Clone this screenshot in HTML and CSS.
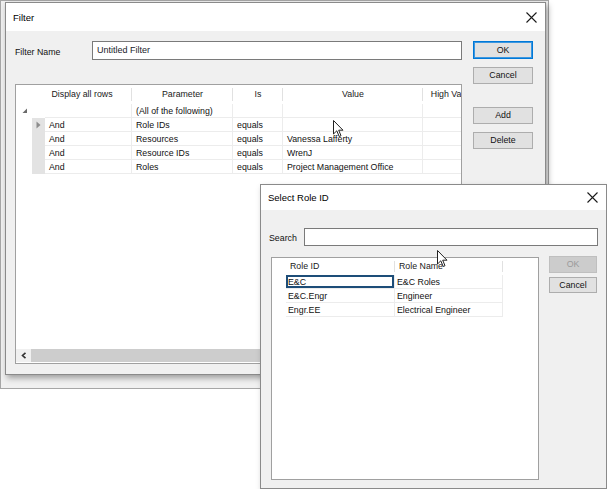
FILE: index.html
```html
<!DOCTYPE html>
<html>
<head>
<meta charset="utf-8">
<link rel="stylesheet" href="styles.css">
</head>
<body>
<div class="desktop">
  <div class="backwin"></div>

  <section class="dlg filter">
    <header class="titlebar">
      <span class="title">Filter</span>
      <svg class="close" width="11" height="11" viewBox="0 0 11 11"><path d="M0.5 0.5 L10.5 10.5 M10.5 0.5 L0.5 10.5" stroke="#1a1a1a" stroke-width="1.1" fill="none"/></svg>
    </header>
    <div class="fbody">
      <div class="fmain">
        <div class="namerow">
          <span class="lbl namelbl">Filter Name</span>
          <div class="input">Untitled Filter</div>
        </div>
        <div class="grid fgrid">
          <div class="gbody">
            <div class="frow fhead">
              <div class="hc"></div>
              <div class="hc span2 sep">Display all rows</div>
              <div class="hc sep">Parameter</div>
              <div class="hc sep">Is</div>
              <div class="hc sep">Value</div>
              <div class="hc">High Value</div>
            </div>
            <div class="frow">
              <div class="c0"><svg width="6" height="6" viewBox="0 0 6 6"><polygon points="5,0.5 5,5 0.5,5" fill="#6a6a6a"/></svg></div>
              <div class="c1 white"></div>
              <div class="cd"></div>
              <div class="cd">(All of the following)</div>
              <div class="cd"></div>
              <div class="cd"></div>
              <div class="cd"></div>
            </div>
            <div class="frow">
              <div class="c0"></div>
              <div class="c1"><svg width="5" height="8" viewBox="0 0 5 8"><polygon points="0.5,0.5 4.5,4 0.5,7.5" fill="#8c8c8c"/></svg></div>
              <div class="cd">And</div>
              <div class="cd">Role IDs</div>
              <div class="cd">equals</div>
              <div class="cd"></div>
              <div class="cd"></div>
            </div>
            <div class="frow">
              <div class="c0"></div>
              <div class="c1"></div>
              <div class="cd">And</div>
              <div class="cd">Resources</div>
              <div class="cd">equals</div>
              <div class="cd">Vanessa Lafferty</div>
              <div class="cd"></div>
            </div>
            <div class="frow">
              <div class="c0"></div>
              <div class="c1"></div>
              <div class="cd">And</div>
              <div class="cd">Resource IDs</div>
              <div class="cd">equals</div>
              <div class="cd">WrenJ</div>
              <div class="cd"></div>
            </div>
            <div class="frow">
              <div class="c0"></div>
              <div class="c1"></div>
              <div class="cd">And</div>
              <div class="cd">Roles</div>
              <div class="cd">equals</div>
              <div class="cd">Project Management Office</div>
              <div class="cd"></div>
            </div>
          </div>
          <div class="hscroll">
            <div class="sarrow"><svg width="6" height="7" viewBox="0 0 6 7"><path d="M4.5 0.8 L1.5 3.5 L4.5 6.2" stroke="#333" stroke-width="1.6" fill="none"/></svg></div>
            <div class="sthumb"></div>
          </div>
        </div>
      </div>
      <div class="btns fbtns">
        <div class="btn default">OK</div>
        <div class="btn b-cancel">Cancel</div>
        <div class="btn b-add">Add</div>
        <div class="btn b-del">Delete</div>
      </div>
    </div>
  </section>

  <section class="dlg role">
    <header class="titlebar rtitle">
      <span class="title">Select Role ID</span>
      <svg class="close" width="11" height="11" viewBox="0 0 11 11"><path d="M0.5 0.5 L10.5 10.5 M10.5 0.5 L0.5 10.5" stroke="#1a1a1a" stroke-width="1.1" fill="none"/></svg>
    </header>
    <div class="rbody">
      <div class="searchrow">
        <span class="lbl searchlbl">Search</span>
        <div class="input"></div>
      </div>
      <div class="rmain">
        <div class="grid rgrid">
          <div class="rrow rhead">
            <div class="hc"></div>
            <div class="hc left sep">Role ID</div>
            <div class="hc left sep">Role Name</div>
            <div class="hc"></div>
          </div>
          <div class="rrow">
            <div class="r0"></div>
            <div class="cd focus">E&amp;C</div>
            <div class="cd">E&amp;C Roles</div>
          </div>
          <div class="rrow">
            <div class="r0"></div>
            <div class="cd">E&amp;C.Engr</div>
            <div class="cd">Engineer</div>
          </div>
          <div class="rrow">
            <div class="r0"></div>
            <div class="cd">Engr.EE</div>
            <div class="cd">Electrical Engineer</div>
          </div>
        </div>
        <div class="btns rbtns">
          <div class="btn disabled">OK</div>
          <div class="btn r-cancel">Cancel</div>
        </div>
      </div>
    </div>
  </section>

  <svg class="cursor cur1" width="12" height="18" viewBox="0 0 12 18"><path d="M0.5 0.5 L0.5 14 L3.8 10.8 L6.2 16.5 L8 15.7 L5.7 10.2 L10 10.2 Z" fill="#fff" stroke="#222" stroke-width="1"/></svg>
  <svg class="cursor cur2" width="12" height="18" viewBox="0 0 12 18"><path d="M0.5 0.5 L0.5 14 L3.8 10.8 L6.2 16.5 L8 15.7 L5.7 10.2 L10 10.2 Z" fill="#fff" stroke="#222" stroke-width="1"/></svg>
</div>
</body>
</html>
```

FILE: styles.css
```css
* { box-sizing: border-box; }
html, body { margin: 0; padding: 0; background: #fff; }
body {
  font-family: "Liberation Sans", Arial, sans-serif;
  font-size: 8.8px;
  color: #111;
}
.desktop {
  position: relative;
  width: 607px;
  height: 489px;
  overflow: hidden;
  background: #fff;
}
.backwin {
  position: absolute;
  left: 0;
  top: 0;
  width: 549px;
  height: 389px;
  background: #f0f0f0;
  border: 1px solid #a6a6a6;
}
.dlg {
  position: absolute;
  background: #f0f0f0;
  border: 1px solid #8a8a8a;
  display: flex;
  flex-direction: column;
}
.filter {
  left: 5px;
  top: 2px;
  width: 541px;
  height: 373px;
  box-shadow: 2px 3px 6px rgba(0, 0, 0, 0.35);
}
.role {
  left: 260px;
  top: 184px;
  width: 347px;
  height: 305px;
  box-shadow: 2px 3px 6px rgba(0, 0, 0, 0.25);
}
.titlebar {
  height: 28px;
  flex: none;
  background: #fff;
  display: flex;
  align-items: center;
  justify-content: space-between;
  padding: 1px 8px 0 7px;
}
.rtitle { height: 25px; padding: 0 8px 0 7px; }
.title { font-size: 9.5px; color: #000; }
.close { display: block; }

/* filter body */
.fbody {
  flex: 1;
  display: flex;
  padding: 10px 12px 10px 9px;
}
.fmain {
  width: 447px;
  display: flex;
  flex-direction: column;
}
.namerow {
  height: 19px;
  display: flex;
  align-items: center;
}
.namelbl { width: 77px; padding-top: 2px; }
.input {
  flex: 1;
  height: 100%;
  background: #fff;
  border: 1px solid #7a7a7a;
  padding: 0 0 0 4px;
  line-height: 16px;
  font-size: 9px;
  color: #1a1a2a;
}
.fgrid {
  margin-top: 24px;
  flex: 1;
}
.grid {
  background: #fff;
  border: 1px solid #a0a0a0;
  display: flex;
  flex-direction: column;
  overflow: hidden;
}
.gbody { flex: 1; overflow: hidden; }
.frow {
  display: grid;
  grid-template-columns: 16px 13px 87px 101px 50px 140px 58px;
  height: 14px;
  width: 466px;
}
.fhead { height: 19px; }
.hc {
  height: 100%;
  text-align: center;
  line-height: 19px;
  white-space: nowrap;
  overflow: hidden;
  background: #fff;
  color: #1a1a1a;
  position: relative;
}
.hc.sep::after {
  content: "";
  position: absolute;
  right: 0;
  top: 3px;
  bottom: 3px;
  width: 1px;
  background: #e1e1e1;
}
.span2 { grid-column: span 2; }
.c0 {
  display: flex;
  align-items: center;
  justify-content: center;
  padding-left: 1px;
}
.c1 {
  background: #e3e3e3;
  display: flex;
  align-items: center;
  justify-content: center;
}
.c1.white { background: #fff; }
.cd {
  border-right: 1px solid #ececec;
  border-bottom: 1px solid #ececec;
  padding-left: 4px;
  line-height: 14px;
  white-space: nowrap;
  overflow: hidden;
}
.hscroll {
  height: 13px;
  flex: none;
  display: flex;
  margin-bottom: 1px;
}
.sarrow {
  width: 15px;
  background: #f0f0f0;
  display: flex;
  align-items: center;
  justify-content: center;
}
.sthumb { flex: 1; background: #cdcdcd; }

/* buttons */
.btns { display: flex; flex-direction: column; }
.fbtns { width: 60px; margin-left: 11px; }
.btn {
  height: 17px;
  background: #e1e1e1;
  border: 1px solid #adadad;
  text-align: center;
  line-height: 15px;
  color: #111;
  font-size: 8.8px;
}
.btn.default { height: 18px; border: 1px solid #0078d7; box-shadow: inset 0 0 0 1px #3c97e0; line-height: 16px; }
.b-cancel { margin-top: 8px; }
.b-add { margin-top: 23px; }
.b-del { margin-top: 8px; }

/* role body */
.rbody {
  flex: 1;
  display: flex;
  flex-direction: column;
  padding: 18px 8px 8px 8px;
}
.searchrow {
  height: 18px;
  display: flex;
  align-items: center;
}
.searchlbl { width: 35px; padding-top: 1px; }
.rmain {
  flex: 1;
  display: flex;
  margin-top: 10px;
}
.rgrid {
  width: 268px;
  margin: 1px 0 0 2px;
}
.rrow {
  display: grid;
  grid-template-columns: 14px 109px 108px 1fr;
  height: 14px;
}
.rhead { height: 17px; }
.rhead .hc { line-height: 17px; background: #fff; }
.hc.left { text-align: left; padding-left: 4px; }
.rrow .cd { padding-left: 2px; }
.focus { box-shadow: inset 0 0 0 2px #1d4d78; }
.rbtns { width: 48px; margin-left: 10px; }
.btn.disabled {
  background: #cccccc;
  border-color: #bfbfbf;
  color: #9a9a9a;
}
.r-cancel { margin-top: 4px; height: 16px; line-height: 14px; }

.cursor { position: absolute; display: block; }
.cur1 { left: 333px; top: 120px; }
.cur2 { left: 437px; top: 250px; }
```
